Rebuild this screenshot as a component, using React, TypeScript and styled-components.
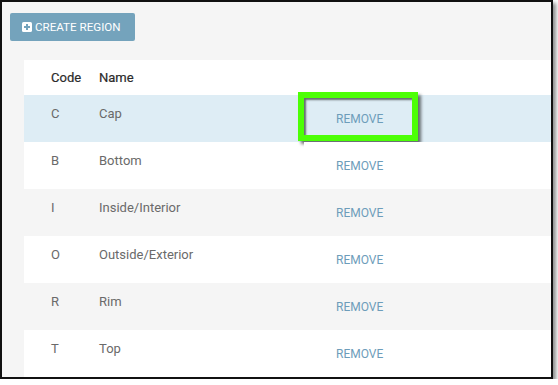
import styled, { createGlobalStyle } from 'styled-components';

const GlobalStyle = createGlobalStyle`
  body {
    margin: 0;
    background: #ffffff;
    font-family: Roboto, "Liberation Sans", Arial, sans-serif;
  }
`;

const Frame = styled.div`
  box-sizing: border-box;
  width: 553px;
  height: 379px;
  border: 2px solid #111;
  background: #f5f5f5;
  overflow: hidden;
  padding: 11px 0 0 8px;
  box-shadow: 3px 3px 4px rgba(0, 0, 0, 0.45);
`;

const CreateButton = styled.button`
  display: flex;
  align-items: center;
  gap: 3px;
  box-sizing: border-box;
  width: 125px;
  height: 28px;
  padding: 0 0 0 12px;
  border: none;
  border-radius: 2px;
  background: #74a3bc;
  color: #fff;
  font-family: Roboto, "Liberation Sans", Arial, sans-serif;
  font-size: 11.6px;
  text-transform: uppercase;
  cursor: pointer;
`;

const Table = styled.div`
  margin: 19px -20px 0 14px;
  display: grid;
  grid-template-columns: 75px 205px 1fr;
  grid-template-rows: 35px;
  grid-auto-rows: 47px;
`;

const HeaderRow = styled.div`
  display: contents;
`;

const HeaderCell = styled.div<{ $first?: boolean }>`
  display: flex;
  align-items: center;
  padding-left: ${(p) => (p.$first ? '27px' : '0')};
  background: #fff;
  color: #2b2b2b;
  font-size: 13px;
  font-weight: 400;
  -webkit-text-stroke: 0.2px #2b2b2b;
`;

const Row = styled.div<{ $bg: string }>`
  display: contents;
  & > div {
    background: ${(p) => p.$bg};
  }
`;

const Cell = styled.div<{ $first?: boolean }>`
  box-sizing: border-box;
  padding: 11px 0 0 ${(p) => (p.$first ? '27px' : '0')};
  color: #6a6a6a;
  font-size: 13px;
  line-height: 15px;
`;

const ActionCell = styled.div`
  position: relative;
  display: flex;
  align-items: center;
`;

const RemoveButton = styled.button`
  border: none;
  background: transparent;
  padding: 0 32px;
  color: #6d9dba;
  font-family: Roboto, "Liberation Sans", Arial, sans-serif;
  font-size: 12px;
  text-transform: uppercase;
  cursor: pointer;
`;

const Highlight = styled.div`
  position: absolute;
  left: -6px;
  top: -3px;
  box-sizing: border-box;
  width: 120px;
  height: 49px;
  border: 6px solid #4cff06;
  box-shadow: 3px 3px 3px rgba(0, 0, 0, 0.55), inset 2px 2px 2px rgba(0, 0, 0, 0.55);
  pointer-events: none;
`;

const PlusIcon = () => (
  <svg width="10" height="10" viewBox="0 0 10 10">
    <rect x="0" y="0" width="10" height="10" rx="1.6" fill="#fff" />
    <rect x="4" y="2" width="2" height="6" fill="#74a3bc" />
    <rect x="2" y="4" width="6" height="2" fill="#74a3bc" />
  </svg>
);

const regions = [
  { code: 'C', name: 'Cap' },
  { code: 'B', name: 'Bottom' },
  { code: 'I', name: 'Inside/Interior' },
  { code: 'O', name: 'Outside/Exterior' },
  { code: 'R', name: 'Rim' },
  { code: 'T', name: 'Top' },
];

const rowBg = (i: number) => (i === 0 ? '#deedf5' : i % 2 === 1 ? '#ffffff' : '#f5f5f5');

const App = () => {
  return (
    <>
      <GlobalStyle />
      <Frame>
        <CreateButton>
          <PlusIcon />
          Create Region
        </CreateButton>
        <Table>
          <HeaderRow>
            <HeaderCell $first>Code</HeaderCell>
            <HeaderCell>Name</HeaderCell>
            <HeaderCell />
          </HeaderRow>
          {regions.map((r, i) => (
            <Row key={r.code} $bg={rowBg(i)}>
              <Cell $first>{r.code}</Cell>
              <Cell>{r.name}</Cell>
              <ActionCell>
                <RemoveButton>Remove</RemoveButton>
                {i === 0 && <Highlight />}
              </ActionCell>
            </Row>
          ))}
        </Table>
      </Frame>
    </>
  );
};

export default App;
